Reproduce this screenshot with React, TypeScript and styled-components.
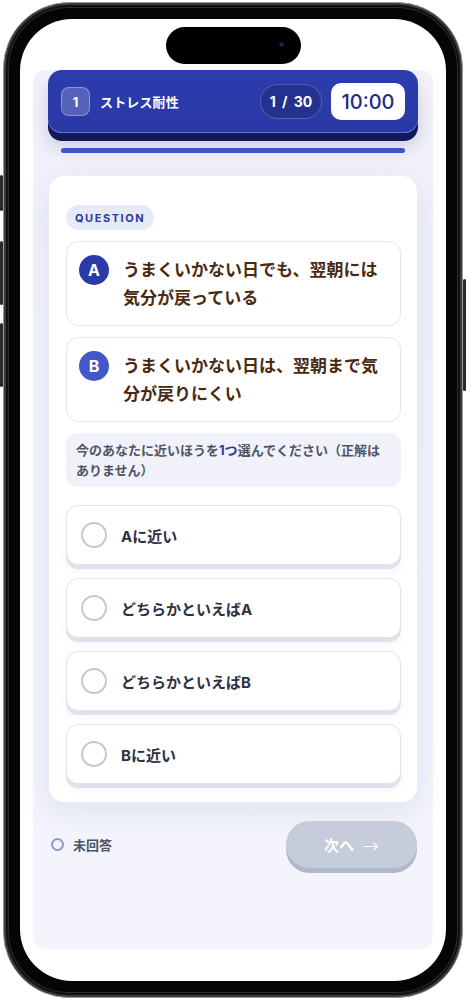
import React from 'react'
import styled, { createGlobalStyle } from 'styled-components'

const GlobalStyle = createGlobalStyle`
    html, body {
        margin: 0;
        padding: 0;
        background: #ffffff;
    }
    body {
        font-family: "Inter", "Noto Sans CJK JP", sans-serif;
    }
    * {
        box-sizing: border-box;
    }
`;

const Page = styled.div`
    width: 466px;
    height: 1000px;
    padding: 2px 3px;
    background: #ffffff;
`;

const Phone = styled.div`
    position: relative;
    width: 460px;
    height: 996px;
    padding: 16px;
    border-radius: 66px;
    background: #050505;
    border: 1px solid #9a9a9a;
    box-shadow:
        inset 0 0 0 2px #3a3a3a,
        inset 0 0 0 4px #111111,
        inset 0 0 0 5px #2c2c2c;
`;

const SideButton = styled.span<{ $side: 'left' | 'right'; $top: number; $height: number }>`
    position: absolute;
    ${({ $side }) => ($side === 'left' ? 'left: -4px;' : 'right: -4px;')}
    top: ${({ $top }) => $top}px;
    width: 3px;
    height: ${({ $height }) => $height}px;
    border-radius: 2px;
    background: #2a2a2a;
`;

const Island = styled.div`
    position: absolute;
    top: 24px;
    left: 162px;
    width: 135px;
    height: 37px;
    border-radius: 19px;
    background: #000000;
`;

const Camera = styled.span`
    position: absolute;
    top: 15px;
    right: 17px;
    width: 5px;
    height: 5px;
    border-radius: 50%;
    background: radial-gradient(circle, #1c3f7a 0%, #0a1326 70%);
`;

const Screen = styled.div`
    width: 100%;
    height: 100%;
    border-radius: 52px;
    background: #ffffff;
    padding: 51px 13px 32px 13px;
    overflow: hidden;
`;

const AppPanel = styled.div`
    height: 100%;
    border-radius: 12px;
    background: linear-gradient(180deg, #f0f1f9 0%, #f3f4fb 60%, #f4f5fc 100%);
    padding: 0 15px;
    display: flex;
    flex-direction: column;
`;

const Header = styled.header`
    height: 63px;
    border-radius: 14px;
    background: linear-gradient(180deg, #2c3cad 0%, #2a39a6 100%);
    box-shadow:
        inset 0 -1px 0 rgba(140, 160, 255, 0.55),
        0 8px 0 #13185a,
        0 14px 18px rgba(30, 40, 120, 0.18);
    display: flex;
    align-items: center;
    padding: 0 13px;
    gap: 10px;
`;

const StepBadge = styled.span`
    width: 29px;
    height: 29px;
    border-radius: 8px;
    background: rgba(255, 255, 255, 0.2);
    border: 1px solid rgba(255, 255, 255, 0.32);
    color: #ffffff;
    font-size: 13px;
    font-weight: 700;
    display: flex;
    align-items: center;
    justify-content: center;
`;

const Title = styled.span`
    flex: 1;
    color: #ffffff;
    font-size: 13px;
    font-weight: 700;
    letter-spacing: 0.01em;
`;

const CountPill = styled.span`
    height: 35px;
    width: 62px;
    border-radius: 18px;
    background: #24318f;
    border: 1px solid rgba(255, 255, 255, 0.22);
    color: #ffffff;
    font-size: 14px;
    font-weight: 700;
    white-space: pre;
    word-spacing: 3px;
    display: flex;
    align-items: center;
    justify-content: center;
`;

const Timer = styled.span`
    height: 37px;
    width: 74px;
    margin-left: -1px;
    border-radius: 10px;
    background: #ffffff;
    color: #1f2a86;
    font-size: 20px;
    font-weight: 500;
    display: flex;
    align-items: center;
    justify-content: center;
`;

const Progress = styled.div`
    margin: 15px 13px 0 13px;
    height: 5px;
    border-radius: 3px;
    background: #3e55c6;
`;

const Card = styled.section`
    margin-top: 22px;
    background: #ffffff;
    border-radius: 16px;
    border: 1px solid #ebecf3;
    box-shadow: 0 10px 30px rgba(120, 130, 190, 0.16);
    padding: 29px 16px 18px 17px;
    display: flex;
    flex-direction: column;
`;

const Tag = styled.span`
    align-self: flex-start;
    height: 25px;
    padding: 0 9px;
    border-radius: 13px;
    background: #e7e9f7;
    color: #2a3a9e;
    font-size: 11px;
    font-weight: 700;
    letter-spacing: 0.14em;
    display: flex;
    align-items: center;
`;

const Statement = styled.div`
    margin-top: 11px;
    border: 1px solid #e4e6ee;
    border-radius: 12px;
    background: #ffffff;
    padding: 14px 14px 13px 12px;
    display: flex;
    align-items: flex-start;
    gap: 14px;
`;

const StatementMark = styled.span<{ $tone: string }>`
    flex: none;
    width: 30px;
    height: 30px;
    margin-top: -1px;
    border-radius: 50%;
    background: ${({ $tone }) => $tone};
    color: #ffffff;
    font-size: 16px;
    font-weight: 700;
    display: flex;
    align-items: center;
    justify-content: center;
`;

const StatementText = styled.p`
    margin: 0;
    color: #4a2a10;
    font-size: 17px;
    font-weight: 700;
    line-height: 28px;
`;

const Hint = styled.p`
    margin: 11px 0 0 0;
    padding: 7px 10px;
    border-radius: 10px;
    background: #f1f2f9;
    color: #4d5468;
    font-size: 13px;
    font-weight: 600;
    line-height: 20px;
`;

const HintStrong = styled.strong`
    color: #2a3aa8;
    font-weight: 700;
`;

const Choices = styled.ul`
    list-style: none;
    margin: 18px 0 0 0;
    padding: 0;
    display: flex;
    flex-direction: column;
    gap: 13px;
`;

const Choice = styled.li`
    height: 60px;
    border: 1px solid #e2e4ec;
    border-radius: 12px;
    background: #ffffff;
    box-shadow: 0 4px 0 #dfe2eb, 0 6px 10px rgba(120, 130, 170, 0.08);
    padding: 0 14px;
    display: flex;
    align-items: center;
    gap: 14px;
`;

const Radio = styled.span`
    width: 26px;
    height: 26px;
    border-radius: 50%;
    border: 2px solid #c3c8d8;
    background: #ffffff;
`;

const ChoiceLabel = styled.span`
    color: #2d3142;
    font-size: 15px;
    font-weight: 700;
`;

const Footer = styled.footer`
    margin-top: 18px;
    padding: 0 1px 0 3px;
    display: flex;
    align-items: flex-start;
    justify-content: space-between;
`;

const Status = styled.span`
    margin-top: 14px;
    display: flex;
    align-items: center;
    gap: 9px;
    color: #4d5468;
    font-size: 13px;
    font-weight: 700;
`;

const StatusRing = styled.span`
    width: 13px;
    height: 13px;
    border-radius: 50%;
    border: 2px solid #8c9bc4;
`;

const NextButton = styled.button`
    width: 131px;
    height: 47px;
    border: none;
    border-radius: 24px;
    background: #c6ccd9;
    box-shadow: 0 5px 0 #b0b8c9;
    color: #ffffff;
    font-family: "Noto Sans CJK JP", sans-serif;
    font-size: 15px;
    font-weight: 700;
    letter-spacing: 0.02em;
    display: flex;
    align-items: center;
    justify-content: center;
    gap: 8px;
`;

const Arrow = styled.span`
    font-family: "Noto Sans CJK JP", sans-serif;
    font-weight: 400;
    font-size: 16px;
`;

const CHOICES = ['Aに近い', 'どちらかといえばA', 'どちらかといえばB', 'Bに近い']

export default function App() {
    return (
        <>
            <GlobalStyle />
            <Page>
                <Phone>
                    <SideButton $side="left" $top={172} $height={36} />
                    <SideButton $side="left" $top={238} $height={64} />
                    <SideButton $side="left" $top={320} $height={64} />
                    <SideButton $side="right" $top={276} $height={112} />
                    <Island>
                        <Camera />
                    </Island>
                    <Screen>
                        <AppPanel>
                            <Header>
                                <StepBadge>1</StepBadge>
                                <Title>ストレス耐性</Title>
                                <CountPill>{'1 / 30'}</CountPill>
                                <Timer>10:00</Timer>
                            </Header>
                            <Progress />
                            <Card>
                                <Tag>QUESTION</Tag>
                                <Statement>
                                    <StatementMark $tone="#2a3aa6">A</StatementMark>
                                    <StatementText>うまくいかない日でも、翌朝には気分が戻っている</StatementText>
                                </Statement>
                                <Statement>
                                    <StatementMark $tone="#4357c8">B</StatementMark>
                                    <StatementText>うまくいかない日は、翌朝まで気分が戻りにくい</StatementText>
                                </Statement>
                                <Hint>
                                    今のあなたに近いほうを<HintStrong>1つ</HintStrong>選んでください（正解はありません）
                                </Hint>
                                <Choices>
                                    {CHOICES.map((label) => (
                                        <Choice key={label}>
                                            <Radio />
                                            <ChoiceLabel>{label}</ChoiceLabel>
                                        </Choice>
                                    ))}
                                </Choices>
                            </Card>
                            <Footer>
                                <Status>
                                    <StatusRing />
                                    未回答
                                </Status>
                                <NextButton>
                                    <span>次へ</span>
                                    <Arrow>→</Arrow>
                                </NextButton>
                            </Footer>
                        </AppPanel>
                    </Screen>
                </Phone>
            </Page>
        </>
    )
}
